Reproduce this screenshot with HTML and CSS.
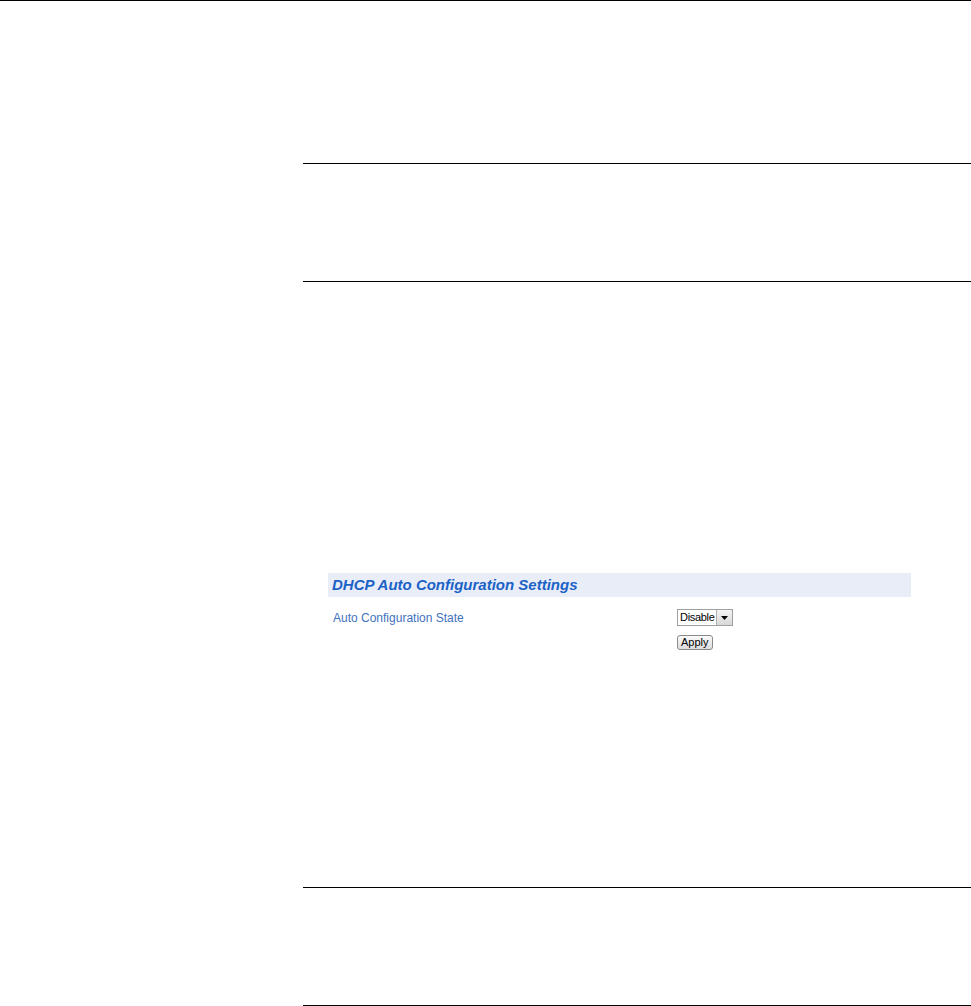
FILE: index.html
```html
<!DOCTYPE html>
<html lang="en">
<head>
    <meta charset="UTF-8">
    <meta name="viewport" content="width=device-width, initial-scale=1.0">
    <title>DHCP Auto Configuration</title>
    <link rel="stylesheet" href="styles.css">
</head>
<body>
    <div class="page-rule"></div>

    <div class="content">
        <div class="note">
            <hr class="rule">
            <div class="note-body"></div>
            <hr class="rule">
        </div>

        <div class="panel">
            <div class="panel-title">DHCP Auto Configuration Settings</div>
            <div class="panel-row first-row">
                <div class="field-label">Auto Configuration State</div>
                <div class="field-control">
                    <span class="select">
                        <span class="select-value">Disable</span>
                        <span class="select-arrow">
                            <svg width="7" height="4" viewBox="0 0 7 4"><path d="M0 0h7L3.5 4z" fill="#000"/></svg>
                        </span>
                    </span>
                </div>
            </div>
            <div class="panel-row">
                <div class="field-label"></div>
                <div class="field-control">
                    <button class="apply-btn">Apply</button>
                </div>
            </div>
        </div>

        <div class="note note-bottom">
            <hr class="rule">
            <div class="note-body"></div>
            <hr class="rule">
        </div>
    </div>
</body>
</html>
```

FILE: styles.css
```css
body {
    margin: 0;
    background: #fff;
    font-family: 'Liberation Sans', Arial, sans-serif;
}

.page-rule {
    height: 1px;
    background: #000;
}

.content {
    margin-left: 303px;
}

.rule {
    margin: 0;
    border: none;
    height: 1px;
    background: #000;
}

.note {
    padding-top: 162px;
}

.note-body {
    height: 117px;
}

.panel {
    margin: 291px 0 0 25px;
    width: 583px;
}

.panel-title {
    height: 24px;
    line-height: 24px;
    padding-left: 4px;
    background: #e9edf8;
    color: #1a62c6;
    font-size: 15px;
    font-weight: bold;
    font-style: italic;
}

.panel-row {
    display: flex;
}

.first-row {
    margin-top: 14px;
}

.field-label {
    width: 344px;
    padding-left: 5px;
    color: #3f72c0;
    font-size: 12px;
    line-height: 15px;
}

.field-control {
    display: flex;
    align-items: center;
}

.select {
    display: inline-flex;
    height: 15px;
    border: 1px solid #a0a0a0;
    background: #fff;
    font-size: 11px;
    margin-top: -2px;
}

.select-value {
    padding: 0 1px 0 2px;
    line-height: 15px;
    color: #000;
    letter-spacing: -0.3px;
}

.select-arrow {
    width: 15px;
    display: flex;
    align-items: center;
    justify-content: center;
    background: linear-gradient(#f4f4f4, #d8d8d8);
    border-left: 1px solid #b0b0b0;
}

.panel-row + .panel-row {
    margin-top: 9px;
}

.apply-btn {
    height: 15px;
    padding: 0 3px;
    border: 1px solid #8a8a8a;
    border-radius: 3px;
    background: linear-gradient(#fafafa, #dcdcdc);
    font-family: 'Liberation Sans', Arial, sans-serif;
    font-size: 11px;
    line-height: 13px;
    color: #000;
}

.note-bottom {
    padding-top: 237px;
}
```
